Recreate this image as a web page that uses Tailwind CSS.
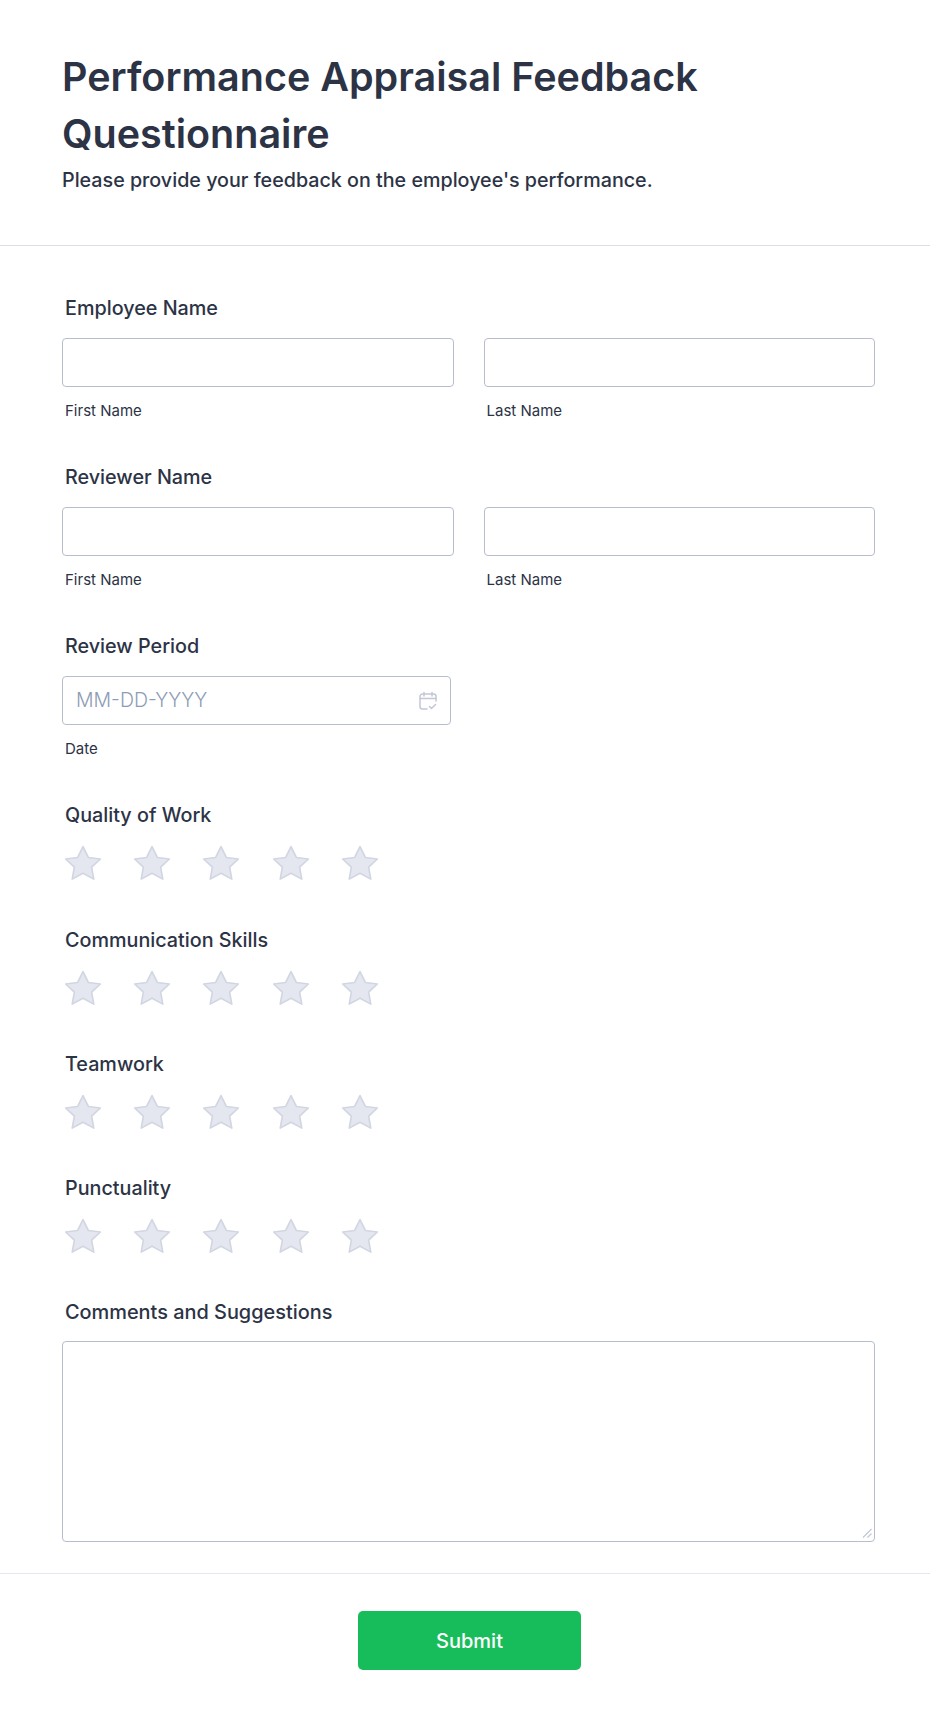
<!DOCTYPE html>
<html>
<head>
<meta charset="utf-8">
<script src="https://cdn.jsdelivr.net/npm/@tailwindcss/browser@4"></script>
</head>
<body class="bg-white font-['Inter',sans-serif] text-[#2c3345]">
<div class="h-[1719px] w-[930px] overflow-hidden">
  <header class="h-[246px] border-b border-[#dcdee8] pl-[62px] pr-[54px] pt-[49px]">
    <h1 class="text-[39.500px] leading-[57px] font-semibold">Performance Appraisal Feedback Questionnaire</h1>
    <p class="mt-[3px] text-[19.700px] leading-[28px] font-medium">Please provide your feedback on the employee's performance.</p>
  </header>
  <main class="pl-[62px] pr-[55px] pt-[50px]">
    <section class="mb-[45px]">
      <h2 class="mb-[18px] pl-[3px] text-[19.750px] leading-[24px] font-medium">Employee Name</h2>
      <div class="grid grid-cols-2 gap-[30px]">
        <div><input type="text" class="block h-[49px] w-full rounded border-[1.500px] border-[#b8bdcc] bg-white"><p class="mt-[13px] pl-[3px] pt-[1px] text-[15px] leading-[19px]">First Name</p></div>
        <div><input type="text" class="block h-[49px] w-full rounded border-[1.500px] border-[#b8bdcc] bg-white"><p class="mt-[13px] pl-[3px] pt-[1px] text-[15px] leading-[19px]">Last Name</p></div>
      </div>
    </section>
    <section class="mb-[45px]">
      <h2 class="mb-[18px] pl-[3px] text-[19.750px] leading-[24px] font-medium">Reviewer Name</h2>
      <div class="grid grid-cols-2 gap-[30px]">
        <div><input type="text" class="block h-[49px] w-full rounded border-[1.500px] border-[#b8bdcc] bg-white"><p class="mt-[13px] pl-[3px] pt-[1px] text-[15px] leading-[19px]">First Name</p></div>
        <div><input type="text" class="block h-[49px] w-full rounded border-[1.500px] border-[#b8bdcc] bg-white"><p class="mt-[13px] pl-[3px] pt-[1px] text-[15px] leading-[19px]">Last Name</p></div>
      </div>
    </section>
    <section class="mb-[45px]">
      <h2 class="mb-[18px] pl-[3px] text-[19.750px] leading-[24px] font-medium">Review Period</h2>
      <div class="flex h-[49px] w-[389px] items-center justify-between rounded border-[1.500px] border-[#b8bdcc] pl-[13px] pr-[12px]">
        <span class="text-[19.500px] font-light text-[#8d9bb5]">MM-DD-YYYY</span>
        <svg class="h-[20px] w-[20px]" viewBox="0 0 20 20" fill="none" stroke="#c3c8d6" stroke-width="1.500" stroke-linecap="round" stroke-linejoin="round"><path d="M9 18H4.500A2.500 2.500 0 0 1 2 15.500v-10A2.500 2.500 0 0 1 4.500 3h11A2.500 2.500 0 0 1 18 5.500v4.500"/><path d="M2 7.500h16M6 1.500v3.500M14 1.500v3.500M11.500 15.500l2 2 4-4"/></svg>
      </div>
      <p class="mt-[13px] pl-[3px] pt-[1px] text-[15px] leading-[19px]">Date</p>
    </section>
    <section class="mb-[47px]">
      <h2 class="mb-[18px] pl-[3px] text-[19.750px] leading-[24px] font-medium">Quality of Work</h2>
      <div class="flex h-[36px] gap-[31.400px] pl-[1.500px]">
        <svg class="h-[36px] w-[38px]" viewBox="0 0 37 35"><path d="M18.500 1.500l5.200 10.600 11.700 1.500-8.500 8 2.100 11.600-10.500-5.800-10.500 5.800 2.100-11.600-8.500-8 11.700-1.500z" fill="#e4e7f0" stroke="#d2d6e2" stroke-width="1.600" stroke-linejoin="round"/></svg>
        <svg class="h-[36px] w-[38px]" viewBox="0 0 37 35"><path d="M18.500 1.500l5.200 10.600 11.700 1.500-8.500 8 2.100 11.600-10.500-5.800-10.500 5.800 2.100-11.600-8.500-8 11.700-1.500z" fill="#e4e7f0" stroke="#d2d6e2" stroke-width="1.600" stroke-linejoin="round"/></svg>
        <svg class="h-[36px] w-[38px]" viewBox="0 0 37 35"><path d="M18.500 1.500l5.200 10.600 11.700 1.500-8.500 8 2.100 11.600-10.500-5.800-10.500 5.800 2.100-11.600-8.500-8 11.700-1.500z" fill="#e4e7f0" stroke="#d2d6e2" stroke-width="1.600" stroke-linejoin="round"/></svg>
        <svg class="h-[36px] w-[38px]" viewBox="0 0 37 35"><path d="M18.500 1.500l5.200 10.600 11.700 1.500-8.500 8 2.100 11.600-10.500-5.800-10.500 5.800 2.100-11.600-8.500-8 11.700-1.500z" fill="#e4e7f0" stroke="#d2d6e2" stroke-width="1.600" stroke-linejoin="round"/></svg>
        <svg class="h-[36px] w-[38px]" viewBox="0 0 37 35"><path d="M18.500 1.500l5.200 10.600 11.700 1.500-8.500 8 2.100 11.600-10.500-5.800-10.500 5.800 2.100-11.600-8.500-8 11.700-1.500z" fill="#e4e7f0" stroke="#d2d6e2" stroke-width="1.600" stroke-linejoin="round"/></svg>
      </div>
    </section>
    <section class="mb-[46px]">
      <h2 class="mb-[18px] pl-[3px] text-[19.750px] leading-[24px] font-medium">Communication Skills</h2>
      <div class="flex h-[36px] gap-[31.400px] pl-[1.500px]">
        <svg class="h-[36px] w-[38px]" viewBox="0 0 37 35"><path d="M18.500 1.500l5.200 10.600 11.700 1.500-8.500 8 2.100 11.600-10.500-5.800-10.500 5.800 2.100-11.600-8.500-8 11.700-1.500z" fill="#e4e7f0" stroke="#d2d6e2" stroke-width="1.600" stroke-linejoin="round"/></svg>
        <svg class="h-[36px] w-[38px]" viewBox="0 0 37 35"><path d="M18.500 1.500l5.200 10.600 11.700 1.500-8.500 8 2.100 11.600-10.500-5.800-10.500 5.800 2.100-11.600-8.500-8 11.700-1.500z" fill="#e4e7f0" stroke="#d2d6e2" stroke-width="1.600" stroke-linejoin="round"/></svg>
        <svg class="h-[36px] w-[38px]" viewBox="0 0 37 35"><path d="M18.500 1.500l5.200 10.600 11.700 1.500-8.500 8 2.100 11.600-10.500-5.800-10.500 5.800 2.100-11.600-8.500-8 11.700-1.500z" fill="#e4e7f0" stroke="#d2d6e2" stroke-width="1.600" stroke-linejoin="round"/></svg>
        <svg class="h-[36px] w-[38px]" viewBox="0 0 37 35"><path d="M18.500 1.500l5.200 10.600 11.700 1.500-8.500 8 2.100 11.600-10.500-5.800-10.500 5.800 2.100-11.600-8.500-8 11.700-1.500z" fill="#e4e7f0" stroke="#d2d6e2" stroke-width="1.600" stroke-linejoin="round"/></svg>
        <svg class="h-[36px] w-[38px]" viewBox="0 0 37 35"><path d="M18.500 1.500l5.200 10.600 11.700 1.500-8.500 8 2.100 11.600-10.500-5.800-10.500 5.800 2.100-11.600-8.500-8 11.700-1.500z" fill="#e4e7f0" stroke="#d2d6e2" stroke-width="1.600" stroke-linejoin="round"/></svg>
      </div>
    </section>
    <section class="mb-[46px]">
      <h2 class="mb-[18px] pl-[3px] text-[19.750px] leading-[24px] font-medium">Teamwork</h2>
      <div class="flex h-[36px] gap-[31.400px] pl-[1.500px]">
        <svg class="h-[36px] w-[38px]" viewBox="0 0 37 35"><path d="M18.500 1.500l5.200 10.600 11.700 1.500-8.500 8 2.100 11.600-10.500-5.800-10.500 5.800 2.100-11.600-8.500-8 11.700-1.500z" fill="#e4e7f0" stroke="#d2d6e2" stroke-width="1.600" stroke-linejoin="round"/></svg>
        <svg class="h-[36px] w-[38px]" viewBox="0 0 37 35"><path d="M18.500 1.500l5.200 10.600 11.700 1.500-8.500 8 2.100 11.600-10.500-5.800-10.500 5.800 2.100-11.600-8.500-8 11.700-1.500z" fill="#e4e7f0" stroke="#d2d6e2" stroke-width="1.600" stroke-linejoin="round"/></svg>
        <svg class="h-[36px] w-[38px]" viewBox="0 0 37 35"><path d="M18.500 1.500l5.200 10.600 11.700 1.500-8.500 8 2.100 11.600-10.500-5.800-10.500 5.800 2.100-11.600-8.500-8 11.700-1.500z" fill="#e4e7f0" stroke="#d2d6e2" stroke-width="1.600" stroke-linejoin="round"/></svg>
        <svg class="h-[36px] w-[38px]" viewBox="0 0 37 35"><path d="M18.500 1.500l5.200 10.600 11.700 1.500-8.500 8 2.100 11.600-10.500-5.800-10.500 5.800 2.100-11.600-8.500-8 11.700-1.500z" fill="#e4e7f0" stroke="#d2d6e2" stroke-width="1.600" stroke-linejoin="round"/></svg>
        <svg class="h-[36px] w-[38px]" viewBox="0 0 37 35"><path d="M18.500 1.500l5.200 10.600 11.700 1.500-8.500 8 2.100 11.600-10.500-5.800-10.500 5.800 2.100-11.600-8.500-8 11.700-1.500z" fill="#e4e7f0" stroke="#d2d6e2" stroke-width="1.600" stroke-linejoin="round"/></svg>
      </div>
    </section>
    <section class="mb-[46px]">
      <h2 class="mb-[18px] pl-[3px] text-[19.750px] leading-[24px] font-medium">Punctuality</h2>
      <div class="flex h-[36px] gap-[31.400px] pl-[1.500px]">
        <svg class="h-[36px] w-[38px]" viewBox="0 0 37 35"><path d="M18.500 1.500l5.200 10.600 11.700 1.500-8.500 8 2.100 11.600-10.500-5.800-10.500 5.800 2.100-11.600-8.500-8 11.700-1.500z" fill="#e4e7f0" stroke="#d2d6e2" stroke-width="1.600" stroke-linejoin="round"/></svg>
        <svg class="h-[36px] w-[38px]" viewBox="0 0 37 35"><path d="M18.500 1.500l5.200 10.600 11.700 1.500-8.500 8 2.100 11.600-10.500-5.800-10.500 5.800 2.100-11.600-8.500-8 11.700-1.500z" fill="#e4e7f0" stroke="#d2d6e2" stroke-width="1.600" stroke-linejoin="round"/></svg>
        <svg class="h-[36px] w-[38px]" viewBox="0 0 37 35"><path d="M18.500 1.500l5.200 10.600 11.700 1.500-8.500 8 2.100 11.600-10.500-5.800-10.500 5.800 2.100-11.600-8.500-8 11.700-1.500z" fill="#e4e7f0" stroke="#d2d6e2" stroke-width="1.600" stroke-linejoin="round"/></svg>
        <svg class="h-[36px] w-[38px]" viewBox="0 0 37 35"><path d="M18.500 1.500l5.200 10.600 11.700 1.500-8.500 8 2.100 11.600-10.500-5.800-10.500 5.800 2.100-11.600-8.500-8 11.700-1.500z" fill="#e4e7f0" stroke="#d2d6e2" stroke-width="1.600" stroke-linejoin="round"/></svg>
        <svg class="h-[36px] w-[38px]" viewBox="0 0 37 35"><path d="M18.500 1.500l5.200 10.600 11.700 1.500-8.500 8 2.100 11.600-10.500-5.800-10.500 5.800 2.100-11.600-8.500-8 11.700-1.500z" fill="#e4e7f0" stroke="#d2d6e2" stroke-width="1.600" stroke-linejoin="round"/></svg>
      </div>
    </section>
    <section>
      <h2 class="mb-[17px] pl-[3px] text-[19.900px] leading-[24px] font-medium">Comments and Suggestions</h2>
      <div class="relative">
        <textarea class="block h-[201px] w-full resize-none rounded border-[1.500px] border-[#b8bdcc] bg-white"></textarea>
        <svg class="absolute bottom-[4px] right-[3px] h-[10px] w-[10px]" viewBox="0 0 10 10" fill="none" stroke="#c3c8d6" stroke-width="1.200"><path d="M1 9.500L9.500 1M5.500 9.500L9.500 5.500"/></svg>
      </div>
    </section>
  </main>
  <footer class="mt-[31px] flex h-[147px] justify-center border-t border-[#e6e8f0] pl-[9px] pt-[37px]">
    <button class="h-[59px] w-[223px] rounded-[5px] bg-[#18bd5b] text-[20px] font-medium text-white">Submit</button>
  </footer>
</div>
</body>
</html>
